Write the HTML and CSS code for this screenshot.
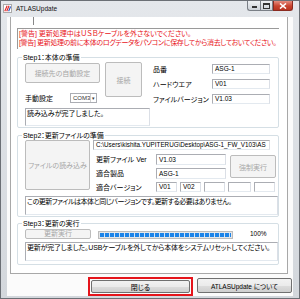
FILE: index.html
```html
<!DOCTYPE html>
<html>

<head>
    <title>ATLASUpdate</title>
    <link rel="stylesheet" href="styles.css">
</head>

<body>
    <div class="window">
        <div class="titlebar">
            <svg class="app-icon" width="9" height="9" viewBox="0 0 9 9">
                <rect width="9" height="9" fill="#fff" />
                <path d="M1 8 L4 1" stroke="#e02020" stroke-width="1.4" />
                <path d="M3.5 8 L6.5 1" stroke="#e02020" stroke-width="1.4" />
                <path d="M6 8 L8.5 2" stroke="#2050c0" stroke-width="1.4" />
            </svg>
            <span class="title">ATLASUpdate</span>
            <div class="caption">
                <span class="cap-btn cap-min"><i></i></span>
                <span class="cap-btn cap-max"><i></i></span>
                <span class="cap-btn cap-close">
                    <svg width="8" height="6" viewBox="0 0 8 6">
                        <path d="M1 0.5 L7 5.5 M7 0.5 L1 5.5" stroke="#fff" stroke-width="1.6" />
                    </svg>
                </span>
            </div>
        </div>

        <div class="client">
            <div class="panel">
                <div class="top-strip"><span class="tick"></span></div>

                <div class="warn">
                    <div>[警告] 更新処理中はＵＳＢケーブルを外さないでください。</div>
                    <div class="warn-long">[警告] 更新処理の前に本体のログデータをパソコンに保存してから消去しておいてください。</div>
                </div>

                <!-- Step1 -->
                <div class="group group1">
                    <span class="legend">Step1：本体の準備</span>
                    <div class="g1-top">
                        <div class="g1-left">
                            <button class="btn disabled btn-auto">接続先の自動設定</button>
                            <button class="btn disabled btn-connect">接続</button>
                            <div class="manual">
                                <span class="manual-label">手動設定</span>
                                <span class="combo">COM3<span class="combo-arrow">▾</span></span>
                            </div>
                        </div>
                        <div class="g1-right">
                            <div class="info-row"><span class="info-label">品番</span><span class="field">ASG-1</span></div>
                            <div class="info-row"><span class="info-label">ハードウエア</span><span class="field">V01</span></div>
                            <div class="info-row"><span class="info-label">ファイルバージョン</span><span class="field">V1.03</span></div>
                        </div>
                    </div>
                    <div class="memo memo-small">読み込みが完了しました。</div>
                </div>

                <!-- Step2 -->
                <div class="group group2">
                    <span class="legend">Step2：更新ファイルの準備</span>
                    <div class="g2-top">
                        <button class="btn disabled btn-file">ファイルの読み込み</button>
                        <div class="g2-right">
                            <span class="field path">C:\Users\kishita.YUPITERUG\Desktop\ASG-1_FW_V103\AS</span>
                            <div class="g2-grid">
                                <span class="g2-label">更新ファイル Ver</span>
                                <span class="field ver">V1.03</span>
                                <button class="btn disabled btn-force">強制実行</button>
                                <span class="g2-label">適合製品</span>
                                <span class="field ver">ASG-1</span>
                                <span class="g2-label">適合バージョン</span>
                                <div class="versions">
                                    <span class="field v-small">V01</span>
                                    <span class="field v-small">V02</span>
                                    <span class="field v-small"></span>
                                    <span class="field v-small v-wide"></span>
                                    <span class="field v-small"></span>
                                </div>
                            </div>
                        </div>
                    </div>
                    <div class="memo memo-kana">この更新ファイルは本体と同じバージョンです。更新する必要はありません。</div>
                </div>

                <!-- Step3 -->
                <div class="group group3">
                    <span class="legend">Step3：更新の実行</span>
                    <div class="g3-top">
                        <button class="btn disabled btn-run">更新実行</button>
                        <div class="progress"><div class="progress-fill" style="width: 100%"></div></div>
                        <span class="percent">100%</span>
                    </div>
                    <div class="memo memo-done">更新が完了しました。USBケーブルを外してから本体をシステムリセットしてください。</div>
                </div>
            </div>

            <div class="footer">
                <div class="highlight">
                    <button class="btn btn-close">閉じる</button>
                </div>
                <button class="btn btn-about">ATLASUpdate について</button>
            </div>
        </div>
    </div>
</body>

</html>
```

FILE: styles.css
```css
body {
    margin: 0;
    padding: 0;
    width: 300px;
    height: 299px;
    overflow: hidden;
    font-family: "Liberation Sans", "Noto Sans CJK JP", sans-serif;
    font-size: 7px;
    color: #000;
}

.window {
    width: 300px;
    height: 299px;
    box-sizing: border-box;
    border: 1px solid #6b6f75;
    background: linear-gradient(#e4e7eb, #d3d7dc);
    display: flex;
    flex-direction: column;
}

/* title bar */
.titlebar {
    height: 16px;
    display: flex;
    align-items: flex-start;
}

.app-icon {
    margin: 3px 0 0 2px;
    border: 1px solid #aaa;
    box-sizing: border-box;
}

.title {
    margin: 3px 0 0 4px;
    font-size: 6.5px;
    line-height: 9px;
    color: #111;
}

.caption {
    margin-left: auto;
    margin-right: 6px;
    display: flex;
}

.cap-btn {
    height: 10px;
    box-sizing: border-box;
    border: 1px solid #7a7f86;
    border-top: none;
    display: flex;
    align-items: center;
    justify-content: center;
}

.cap-min,
.cap-max {
    width: 13px;
    background: linear-gradient(#eef0f3, #cdd2d8);
}

.cap-min {
    border-bottom-left-radius: 3px;
    border-right: none;
}

.cap-min i {
    width: 5px;
    height: 2px;
    margin-top: 3px;
    background: #333;
}

.cap-max i {
    width: 5px;
    height: 3px;
    border: 1px solid #333;
    border-top-width: 2px;
}

.cap-close {
    width: 20px;
    border-color: #8a2a20;
    border-bottom-right-radius: 3px;
    background: linear-gradient(#e58c7f, #c9442f 55%, #b8331f);
}

/* client area */
.client {
    margin: 0 6px 0 6px;
    height: 279px;
    background: #fbfbfb;
    display: flex;
    flex-direction: column;
}

.panel {
    margin-left: 3px;
    width: 278px;
    height: 257px;
    box-sizing: border-box;
    border: 1px solid #a8a8a8;
    border-top: none;
    background: #fff;
}

.top-strip {
    height: 11px;
}

.tick {
    display: block;
    margin-left: 22px;
    width: 1px;
    height: 8px;
    background: #888;
}

.warn {
    margin-left: 6px;
    width: 262px;
    height: 21px;
    box-sizing: border-box;
    border-top: 1px solid #9a9a9a;
    border-left: 1px solid #9a9a9a;
    padding-left: 1px;
    color: #e8141b;
    line-height: 9px;
    font-feature-settings: "palt";
    white-space: nowrap;
}

.warn-long {
    letter-spacing: -0.35px;
}

/* group boxes */
.group {
    position: relative;
    margin-left: 6px;
    width: 262px;
    box-sizing: border-box;
    border: 1px solid #d5dfe5;
    border-radius: 2px;
    padding: 5px 0 1px 7px;
}

.group1 {
    margin-top: 8px;
}

.group2 {
    margin-top: 7px;
    padding-top: 4px;
}

.group3 {
    margin-top: 6px;
}

.legend {
    position: absolute;
    top: -5px;
    left: 4px;
    padding: 0 1px;
    background: #fff;
    line-height: 9px;
    font-feature-settings: "palt";
}

/* buttons */
.btn {
    font-family: inherit;
    font-size: 7px;
    padding: 0;
    margin: 0;
    box-sizing: border-box;
    border: 1px solid #707070;
    border-radius: 2px;
    background: linear-gradient(#f2f2f2, #ebebeb 50%, #dddddd 51%, #cfcfcf);
    color: #000;
    font-feature-settings: "palt";
}

.btn.disabled {
    border-color: #bcbcbc;
    background: #f4f4f4;
    color: #a6a6a6;
}

/* step1 */
.g1-top {
    display: flex;
}

.g1-left {
    display: grid;
    grid-template-columns: 75px 37px;
    grid-template-rows: 20px 11px;
    column-gap: 5px;
    row-gap: 9px;
}

.btn-auto {
    height: 20px;
}

.btn-connect {
    grid-column: 2;
    grid-row: 1 / 3;
    height: 35px;
    margin-top: -1px;
}

.manual {
    display: flex;
    align-items: center;
}

.manual-label {
    width: 45px;
    font-feature-settings: "palt";
}

.combo {
    width: 27px;
    height: 10px;
    box-sizing: border-box;
    border: 1px solid #abadb3;
    font-size: 6px;
    line-height: 8px;
    padding-left: 2px;
    display: flex;
    color: #333;
}

.combo-arrow {
    margin-left: auto;
    width: 6px;
    border-left: 1px solid #d0d0d0;
    text-align: center;
    font-size: 5px;
}

.g1-right {
    margin-left: 11px;
    margin-top: 1px;
    display: flex;
    flex-direction: column;
    gap: 5px;
}

.info-row {
    display: flex;
    align-items: center;
}

.info-label {
    width: 59px;
    font-feature-settings: "palt";
}

.field {
    display: block;
    box-sizing: border-box;
    border: 1px solid #abadb3;
    border-right-color: #dbdfe6;
    border-bottom-color: #e3e9ef;
    background: #fff;
    height: 10px;
    line-height: 8px;
    padding-left: 2px;
    font-size: 6.5px;
    white-space: nowrap;
    overflow: hidden;
}

.info-row .field {
    width: 58px;
}

.memo {
    margin-top: 4px;
    width: 253px;
    height: 19px;
    box-sizing: border-box;
    border: 1px solid #abadb3;
    border-right-color: #dbdfe6;
    border-bottom-color: #e3e9ef;
    padding: 0 1px;
    line-height: 10px;
    white-space: nowrap;
    overflow: hidden;
    font-feature-settings: "palt";
}

.memo-small {
    width: 125px;
    height: 18px;
}

.memo-kana {
    letter-spacing: -0.5px;
}

.memo-done {
    letter-spacing: -0.2px;
}

/* step2 */
.g2-top {
    display: flex;
}

.btn-file {
    width: 65px;
    height: 50px;
}

.g2-right {
    margin-left: 3px;
}

.path {
    width: 177px;
    font-size: 6.3px;
}

.g2-grid {
    margin-top: 4px;
    display: grid;
    grid-template-columns: 56px 70px 46px;
    grid-template-rows: 11px 11px 10px;
    column-gap: 4px;
    row-gap: 3px;
    padding-left: 3px;
}

.g2-label {
    line-height: 12px;
    font-feature-settings: "palt";
    white-space: nowrap;
}

.field.ver {
    height: 11px;
    line-height: 9px;
}

.btn-force {
    grid-column: 3;
    grid-row: 1 / 3;
    height: 23px;
    margin-top: 1px;
}

.versions {
    grid-column: 2 / 4;
    display: flex;
    gap: 3px;
}

.v-small {
    width: 21px;
}

.v-wide {
    width: 23px;
}

/* step3 */
.g3-top {
    display: flex;
    align-items: flex-start;
}

.btn-run {
    width: 66px;
    height: 10px;
    line-height: 8px;
}

.progress {
    margin: 2px 0 0 7px;
    width: 135px;
    height: 8px;
    box-sizing: border-box;
    border: 1px solid #bcbcbc;
    background: #e6e6e6;
    padding: 1px;
}

.progress-fill {
    height: 100%;
    background: repeating-linear-gradient(90deg, #1d84e8 0 4px, #cfe4fa 4px 5px);
}

.percent {
    margin: 1px 0 0 17px;
    font-size: 6.5px;
}

.group3 .memo {
    margin-top: 3px;
    margin-bottom: 2px;
}

/* footer */
.footer {
    display: flex;
    align-items: flex-start;
    padding: 3px 0 0 81px;
}

.highlight {
    border: 2px solid #e5141b;
    padding: 1px 1px 1px 1px;
}

.btn-close {
    display: block;
    width: 99px;
    height: 13px;
}

.btn-about {
    margin: 1px 0 0 4px;
    width: 95px;
    height: 15px;
    font-size: 6.5px;
}
```
